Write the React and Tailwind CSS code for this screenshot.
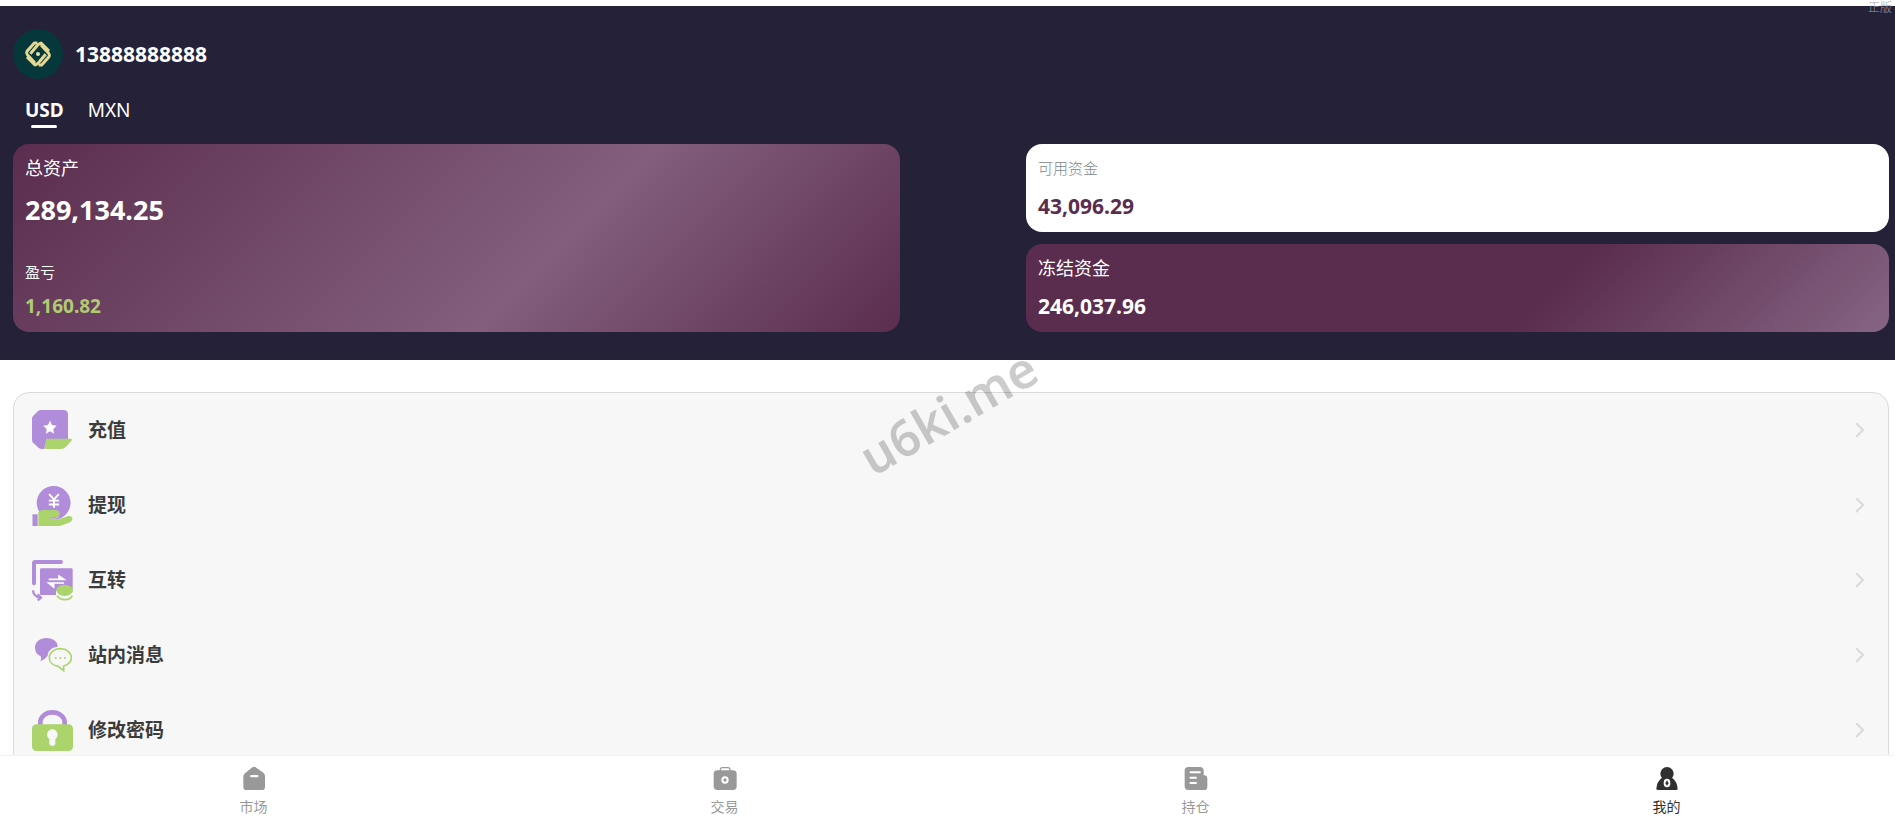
import React, { useState } from "react";

function Logo() {
  const half = (
    <>
      <path d="M73 42H64L42 67Q39 72 43 77L66 102" />
      <path d="M52 74L76 46L84 42L108 66" />
    </>
  );
  return (
    <svg viewBox="0 0 150 150" className="size-[50px] shrink-0" aria-hidden="true">
      <circle cx="75" cy="75" r="75" fill="#06373b" />
      <g fill="none" stroke="#e3d993" strokeWidth="9" strokeLinejoin="round">
        {half}
        <g transform="rotate(180 75 75)">{half}</g>
      </g>
      <circle cx="75" cy="75" r="6" fill="#e8e0ae" />
    </svg>
  );
}

function DepositIcon() {
  return (
    <svg viewBox="0 0 123 123" className="size-[41px] shrink-0" aria-hidden="true">
      <path d="M26 0H94Q108 0 108 14V88H44L37 117H27Q20 116 14 108L3 98Q0 95 0 90V26Q0 20 4 17L16 5Q20 0 26 0Z" fill="#b18cdb" />
      <path d="M44 86H118Q122 88 118 93L102 110Q95 117 87 117H40Q37 112 39 106Z" fill="#acd46d" />
      <path d="M54 32L60 45L74 47L64 57L66 71L54 64L42 71L44 57L34 47L48 45Z" fill="#fff" />
    </svg>
  );
}

function WithdrawIcon() {
  return (
    <svg viewBox="0 0 123 126" className="size-[41px] shrink-0" aria-hidden="true">
      <circle cx="65" cy="55" r="52" fill="#b18cdb" />
      <path d="M51 28L66 44L81 28M66 44V70M50 48H82M50 60H82" fill="none" stroke="#fff" strokeWidth="6" />
      <path d="M0 90H16V126H0Z" fill="#b18cdb" />
      <path
        d="M18 126V84Q24 77 34 77H72Q84 79 84 89Q83 96 76 98L48 100Q50 105 60 105H80L110 95Q122 94 123 104Q122 112 114 115L84 126Z"
        fill="#acd46d"
      />
      <path d="M50 101Q66 106 80 99" fill="none" stroke="#d8ecb8" strokeWidth="2" />
    </svg>
  );
}

function TransferIcon() {
  return (
    <svg viewBox="0 0 123 123" className="size-[41px] shrink-0" aria-hidden="true">
      <path d="M6 70V10Q6 6 10 6H87" fill="none" stroke="#b18cdb" strokeWidth="12" strokeLinecap="round" />
      <rect x="24" y="25" width="98" height="80" rx="4" fill="#b18cdb" />
      <path d="M50 58H96L81 48V58M96 69H50L65 81V69" fill="#fff" stroke="#fff" strokeWidth="5" />
      <path d="M3 91Q4 110 25 113M17 103L27 113L17 121" fill="none" stroke="#b18cdb" strokeWidth="7" />
      <path d="M72 92V104Q76 121 98 121Q120 121 123 104V92Z" fill="#f7f7f7" />
      <ellipse cx="98" cy="91" rx="25" ry="17" fill="#acd46d" />
      <path d="M75 107Q82 119 98 119Q115 119 121 107" fill="none" stroke="#acd46d" strokeWidth="5" />
    </svg>
  );
}

function MessageIcon() {
  return (
    <svg viewBox="0 0 123 123" className="size-[41px] shrink-0" aria-hidden="true">
      <path d="M43 9C64 9 77 20 77 35C58 37 47 49 47 62Q38 75 25 79Q29 71 26 63C14 58 9 49 9 38C9 21 24 9 43 9Z" fill="#b18cdb" />
      <path
        d="M85 41C104 41 118 53 118 68C118 80 108 89 95 93V107L79 94C63 92 52 82 52 68C52 53 66 41 85 41Z"
        fill="#f7f7f7"
        stroke="#acd46d"
        strokeWidth="5"
      />
      <g fill="#acd46d">
        <circle cx="71" cy="69" r="3" />
        <circle cx="85" cy="69" r="3" />
        <circle cx="99" cy="69" r="3" />
      </g>
    </svg>
  );
}

function PasswordIcon() {
  return (
    <svg viewBox="0 0 123 123" className="size-[41px] shrink-0" aria-hidden="true">
      <path d="M25 48V38C25 20 41 7 61 7S98 20 98 38V48" fill="none" stroke="#b18cdb" strokeWidth="14" />
      <rect x="0" y="43" width="123" height="80" rx="13" fill="#acd46d" />
      <path d="M61 58A16 16 0 0 1 70 87V102Q68 108 61 108Q54 108 52 102V87A16 16 0 0 1 61 58Z" fill="#f7f7f7" />
    </svg>
  );
}

function MarketIcon() {
  return (
    <svg viewBox="0 0 72 72" className="size-6" aria-hidden="true">
      <path d="M9 22L31 4Q36 1 41 4L64 20Q69 24 69 30V62Q69 72 60 72H13Q4 72 4 62V31Q4 26 9 22Z" fill="currentColor" />
      <rect x="25" y="27" width="24" height="7" rx="1" fill="#fff" />
    </svg>
  );
}

function TradeIcon() {
  return (
    <svg viewBox="0 0 72 72" className="size-6" aria-hidden="true">
      <path d="M22 16V10Q23 5 28 5H45Q50 5 51 10V16" fill="none" stroke="currentColor" strokeWidth="4" />
      <rect x="2" y="13" width="69" height="59" rx="11" fill="currentColor" />
      <circle cx="36" cy="42" r="8" fill="none" stroke="#fff" strokeWidth="6" />
    </svg>
  );
}

function HoldingsIcon() {
  return (
    <svg viewBox="0 0 72 72" className="size-6" aria-hidden="true">
      <path d="M13 3H48Q59 3 59 14V28H62Q70 29 70 36V62Q70 72 60 72H13Q2 72 2 61V14Q2 3 13 3Z" fill="currentColor" />
      <path d="M17 19H50M17 35H38M17 51H38" fill="none" stroke="#fff" strokeWidth="6" />
    </svg>
  );
}

function ProfileIcon() {
  return (
    <svg viewBox="0 0 72 72" className="size-6" aria-hidden="true">
      <circle cx="36" cy="23" r="20" fill="currentColor" />
      <path d="M20 36H52Q67 48 68 68Q68 72 64 72H9Q4 72 4 68Q5 48 20 36Z" fill="currentColor" />
      <ellipse cx="36" cy="51" rx="10" ry="13" fill="#fff" />
      <path d="M36 43L41 52L36 59L31 52Z" fill="currentColor" />
    </svg>
  );
}

const menu = [
  { label: "充值", Icon: DepositIcon },
  { label: "提现", Icon: WithdrawIcon },
  { label: "互转", Icon: TransferIcon },
  { label: "站内消息", Icon: MessageIcon },
  { label: "修改密码", Icon: PasswordIcon },
];

const tabs = [
  { label: "市场", Icon: MarketIcon },
  { label: "交易", Icon: TradeIcon },
  { label: "持仓", Icon: HoldingsIcon },
  { label: "我的", Icon: ProfileIcon },
];

export default function App() {
  const [currency, setCurrency] = useState("USD");
  const [active, setActive] = useState("我的");

  return (
    <div className="relative flex h-screen flex-col overflow-hidden bg-white font-['Noto_Sans','Noto_Sans_CJK_SC',sans-serif]">
      <main className="min-h-0 flex-1 overflow-y-auto pt-[6px] [scrollbar-width:none]">
        <header className="bg-[#242139] pt-[23px] pr-[6px] pb-7 pl-[13px] text-white">
          <div className="flex items-center gap-3">
            <Logo />
            <span className="text-[21px] leading-7 font-bold">13888888888</span>
          </div>

          <div className="flex gap-6 px-3 pt-[19px] pb-4">
            {["USD", "MXN"].map((code) => (
              <button
                key={code}
                type="button"
                onClick={() => setCurrency(code)}
                className={`flex flex-col items-center gap-[3px] text-[19px] leading-6 ${currency === code ? "font-bold" : ""}`}
              >
                {code}
                <span className={`h-[3px] w-[26px] rounded-sm ${currency === code ? "bg-white" : ""}`} />
              </button>
            ))}
          </div>

          <div className="flex justify-between">
            <section className="flex w-[47.3%] flex-col justify-between rounded-2xl bg-[linear-gradient(135deg,#5b2d4f_0%,#835f7d_60%,#5b2d4f_100%)] p-3">
              <div>
                <h2 className="text-[18px] leading-6">总资产</h2>
                <p className="mt-3 text-[27px] leading-9 font-bold">289,134.25</p>
              </div>
              <div>
                <h2 className="text-[15px] leading-6">盈亏</h2>
                <p className="mt-2 text-[19px] leading-7 font-bold text-[#b0cc70]">1,160.82</p>
              </div>
            </section>
            <div className="flex w-[46%] flex-col gap-3">
              <section className="rounded-2xl bg-white p-3">
                <h2 className="text-[15px] leading-6 font-light text-[#80868a]">可用资金</h2>
                <p className="mt-3 text-[21px] leading-7 font-bold text-[#5a2d4e]">43,096.29</p>
              </section>
              <section className="rounded-2xl bg-[linear-gradient(135deg,#5a2c4f_0%,#5a2c4d_60%,#866584_100%)] p-3">
                <h2 className="text-[18px] leading-6">冻结资金</h2>
                <p className="mt-3 text-[21px] leading-7 font-bold">246,037.96</p>
              </section>
            </div>
          </div>
        </header>

        <ul className="mt-8 mr-[6px] ml-[13px] rounded-2xl border border-[#dadada] bg-[#f7f7f7]">
          {menu.map(({ label, Icon }) => (
            <li key={label}>
              <a href="#" className="flex h-[75px] items-center gap-[15px] pr-6 pl-[18px] text-[19px] font-bold text-[#3b3b3b]">
                <Icon />
                <span className="flex-1">{label}</span>
                <svg viewBox="0 0 8 16" className="h-4 w-2" fill="none" stroke="#dadada" strokeWidth="2" aria-hidden="true">
                  <path d="M0 0L7 7L0 14" />
                </svg>
              </a>
            </li>
          ))}
        </ul>
      </main>

      <nav className="-mr-[7px] flex shrink-0 border-t border-[#f2f2f2] bg-white pl-[18px]">
        {tabs.map(({ label, Icon }) => (
          <button
            key={label}
            type="button"
            onClick={() => setActive(label)}
            className={`flex flex-1 flex-col items-center gap-2 pt-[10px] text-[14px] leading-[18px] ${active === label ? "text-[#303030]" : "text-[#999]"}`}
          >
            <Icon />
            {label}
          </button>
        ))}
      </nav>

      <span className="absolute top-0 right-[3px] text-[12px] leading-4 font-light text-[#9a9aa8]">正版</span>
      <span className="pointer-events-none absolute top-1/2 left-1/2 mt-1 -translate-x-1/2 -translate-y-1/2 -rotate-30 text-[50px] leading-none font-semibold text-black/20">
        u6ki.me
      </span>
    </div>
  );
}
